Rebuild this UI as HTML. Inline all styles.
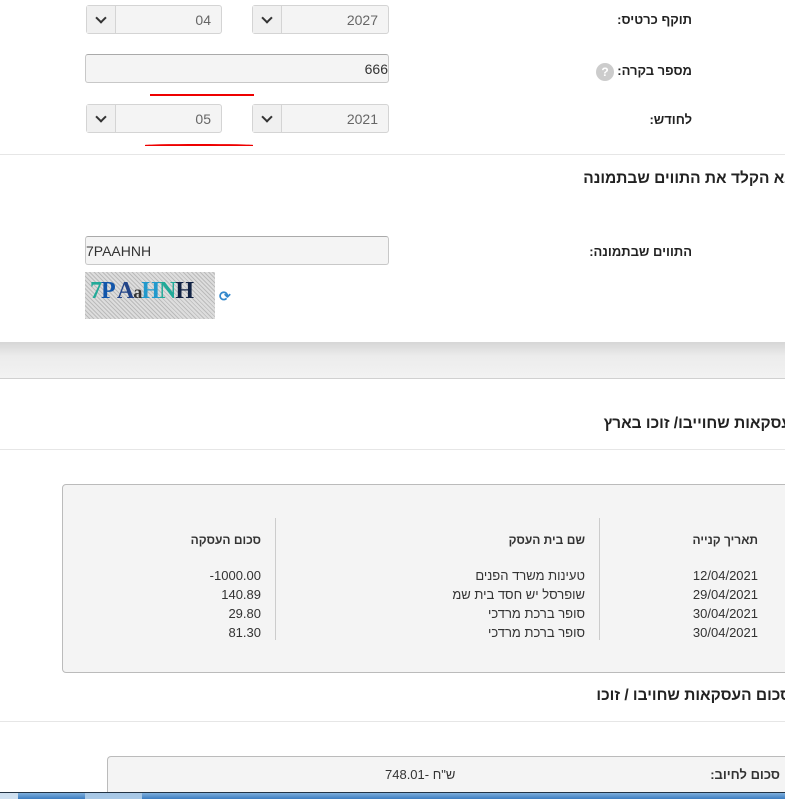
<!DOCTYPE html>
<html style="overflow:hidden;width:785px;height:799px"><head><meta charset="utf-8"><style>
*{box-sizing:border-box;margin:0;padding:0}
body{width:785px;height:799px;overflow:hidden;background:#fff;position:relative;font-family:"Liberation Sans","Noto Sans CJK SC",sans-serif;font-size:13px;color:#333}
.a{position:absolute}
.sel{position:absolute;height:29px;border:1px solid #d4d4d4;border-radius:3px;background:#f4f4f4;color:#666;font-size:14px}
.sel .ar{position:absolute;left:0;top:0;width:29px;height:27px;border-right:1px solid #d4d4d4;background:#f0f0f0}
.sel .ar:after{content:"";position:absolute;left:10px;top:8px;width:6px;height:6px;border-right:2.5px solid #333;border-bottom:2.5px solid #333;transform:rotate(45deg)}
.sel .v{position:absolute;right:10px;top:6px}
.inp{position:absolute;height:29px;border:1px solid #c8c8c8;border-top-color:#aaa;border-radius:3px;background:#f4f4f4;font-size:14px;color:#333}
.lbl{position:absolute;right:93px;font-weight:bold;font-size:13px;direction:rtl;color:#222}
.h{position:absolute;font-weight:bold;font-size:15.5px;direction:rtl;white-space:nowrap;color:#222}
.hr{position:absolute;left:0;width:785px;height:1px;background:#e6e6e6}
.r{position:absolute;direction:rtl;text-align:right;white-space:nowrap;color:#333}
</style></head><body>
<div class="sel" style="left:86px;top:5px;width:136px"><div class="ar"></div><span class="v">04</span></div>
<div class="sel" style="left:252px;top:5px;width:137px"><div class="ar"></div><span class="v">2027</span></div>
<div class="lbl" style="top:12px">תוקף כרטיס:</div>

<div class="inp" style="left:85px;top:54px;width:304px"><span class="a" style="right:0;top:6px">666</span></div>
<div class="lbl" style="top:63px">מספר בקרה:</div>
<div class="a" style="left:596px;top:63px;width:18px;height:18px;border-radius:50%;background:#ccc;color:#fff;font-size:12px;font-weight:bold;text-align:center;line-height:18px">?</div>
<div class="a" style="left:150px;top:94px;width:104px;height:2px;background:#e00"></div>
<div class="a" style="left:145px;top:144px;width:108px;height:2px;background:#e00;border-radius:50% 50% 0 0"></div>

<div class="sel" style="left:86px;top:104px;width:136px"><div class="ar"></div><span class="v">05</span></div>
<div class="sel" style="left:252px;top:104px;width:137px"><div class="ar"></div><span class="v">2021</span></div>
<div class="lbl" style="top:112px">לחודש:</div>

<div class="hr" style="top:154px"></div>
<div class="h" style="right:-6px;top:170px">נא הקלד את התווים שבתמונה</div>

<div class="inp" style="left:85px;top:236px;width:304px"><span class="a" style="left:0;top:6px">7PAAHNH</span></div>
<div class="lbl" style="top:244px">התווים שבתמונה:</div>
<div class="a" style="left:85px;top:272px;width:130px;height:47px;background:#ccc;background-image:repeating-linear-gradient(45deg,#bbb 0 1px,#ddd 1px 3px);font-family:'Liberation Serif',serif;font-weight:bold;font-size:24px;padding:6px 0 0 5px;letter-spacing:-1px"><span style="color:#2a9">7</span><span style="color:#15a">P</span> <span style="color:#248">A</span><span style="color:#333;font-size:18px">a</span><span style="color:#29c">H</span><span style="color:#2a9">N</span><span style="color:#124">H</span></div>
<div class="a" style="left:219px;top:288px;color:#38c;font-size:14px;font-weight:bold">⟳</div>

<div class="a" style="left:0;top:342px;width:785px;height:37px;background:linear-gradient(#d6d6d6,#ececec 40%,#f2f2f2);border-bottom:1px solid #d0d0d0"></div>

<div class="h" style="right:-6px;top:415px">עסקאות שחוייבו/ זוכו בארץ</div>
<div class="hr" style="top:449px"></div>

<div class="a" style="left:62px;top:484px;width:740px;height:189px;background:#f4f4f4;border:1px solid #bbb;border-radius:4px"></div>
<div class="a" style="left:275px;top:518px;width:1px;height:122px;background:#ccc"></div>
<div class="a" style="left:599px;top:518px;width:1px;height:122px;background:#ccc"></div>
<div class="r" style="right:27px;top:533px;font-weight:bold;font-size:12px">תאריך קנייה</div>
<div class="r" style="right:200px;top:533px;font-weight:bold;font-size:12px">שם בית העסק</div>
<div class="r" style="right:524px;top:533px;font-weight:bold;font-size:12px">סכום העסקה</div>
<div class="r" style="right:27px;top:566px;line-height:19px;font-size:13px">12/04/2021<br>29/04/2021<br>30/04/2021<br>30/04/2021</div>
<div class="r" style="right:200px;top:566px;line-height:19px;font-size:13px">טעינות משרד הפנים<br>שופרסל יש חסד בית שמ<br>סופר ברכת מרדכי<br>סופר ברכת מרדכי</div>
<div class="a" style="right:524px;top:566px;line-height:19px;font-size:13px;direction:ltr;text-align:right;white-space:nowrap">-1000.00<br>140.89<br>29.80<br>81.30</div>

<div class="h" style="right:-6px;top:687px">סכום העסקאות שחויבו / זוכו</div>
<div class="hr" style="top:721px"></div>

<div class="a" style="left:107px;top:756px;width:700px;height:40px;background:#f4f4f4;border:1px solid #bbb;border-bottom:none;border-radius:4px 0 0 0"></div>
<div class="r" style="right:5px;top:767px;font-weight:bold;font-size:13px">סכום לחיוב:</div>
<div class="a" style="left:385px;top:767px;font-size:13px;white-space:nowrap">ש"ח <span>-748.01</span></div>

<div class="a" style="left:0;top:792px;width:785px;height:7px;background:linear-gradient(#7fb0dd,#3b7cc0);border-top:1px solid #234"></div>
<div class="a" style="left:0;top:793px;width:18px;height:6px;background:#cfe0f0"></div>
<div class="a" style="left:85px;top:793px;width:57px;height:6px;background:#a8c8e6"></div>
</body></html>
